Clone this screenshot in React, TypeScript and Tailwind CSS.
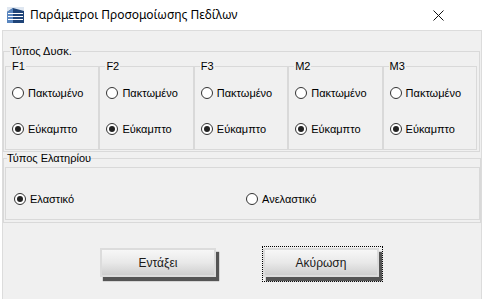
import React from 'react'

const titleFont = { fontFamily: "'Noto Sans', 'Open Sans', sans-serif" }
const formFont = { fontFamily: "'Liberation Sans', Arial, sans-serif" }

function Radio({ label, checked }: { label: string; checked?: boolean }) {
  return (
    <div className="flex items-center h-4 leading-4">
      <span className="w-3 h-3 rounded-full border border-[#333] bg-white flex items-center justify-center shrink-0">
        {checked && <span className="w-[6px] h-[6px] rounded-full bg-[#222]" />}
      </span>
      <span className="ml-[4px] text-[11px] text-black whitespace-nowrap">{label}</span>
    </div>
  )
}

function Support({ name }: { name: string }) {
  return (
    <fieldset className="border border-[#d9d9d9] pl-[5px] pt-[12px] pb-[12px] min-w-0">
      <legend className="px-[1px] text-[11px] leading-[13px] text-black">{name}</legend>
      <div className="pl-[1px] flex flex-col gap-[20px]">
        <Radio label="Πακτωμένο" />
        <Radio label="Εύκαμπτο" checked />
      </div>
    </fieldset>
  )
}

function WinButton({ label }: { label: string }) {
  return (
    <div className="relative w-[116px] h-[29px] shadow-[3px_4px_1px_#555]">
      <div className="absolute inset-0 border-2 border-[#dcdcdc] bg-gradient-to-b from-[#f7f7f7] via-[#e9e9e9] to-[#cfcfcf] flex items-center justify-center">
        <span className="text-[12px] text-[#1a1a1a]">{label}</span>
      </div>
    </div>
  )
}

export default function App() {
  return (
    <div className="w-[482px] h-[299px] bg-white flex flex-col overflow-hidden">
      <div className="h-[30px] flex items-center shrink-0" style={titleFont}>
        <svg width="17" height="16" viewBox="0 0 17 16" className="ml-[7px]">
          <rect x="0" y="0" width="17" height="16" fill="#dfe7f1" />
          <polygon points="0,16 0,5 6,1 17,4 17,16" fill="#1f4478" />
          <polygon points="0,16 0,5 6,1 6,16" fill="#5a86bf" />
          <g stroke="#ffffff" strokeWidth="1">
            <line x1="1" y1="6.5" x2="16" y2="6.5" />
            <line x1="1" y1="9.5" x2="16" y2="9.5" />
            <line x1="1" y1="12.5" x2="16" y2="12.5" />
          </g>
        </svg>
        <span className="ml-[6px] text-[12px] text-black">Παράμετροι Προσομοίωσης Πεδίλων</span>
        <svg width="11" height="11" viewBox="0 0 11 11" className="ml-auto mr-[38px]">
          <path d="M0.5 0.5 L10.5 10.5 M10.5 0.5 L0.5 10.5" stroke="#111" strokeWidth="1" />
        </svg>
      </div>

      <div className="flex-1 ml-[2px] w-[480px] bg-[#f0f0f0] border-t border-x border-[#dcdcdc] flex flex-col" style={formFont}>
        <fieldset className="mt-[14px] w-[477px] border border-[#d9d9d9] pl-[1px] pt-[2px] pb-[1px]">
          <legend className="ml-[5px] text-[11px] leading-[13px] text-black">Τύπος Δυσκ.</legend>
          <div className="grid grid-cols-5 w-[472px]">
            <Support name="F1" />
            <Support name="F2" />
            <Support name="F3" />
            <Support name="M2" />
            <Support name="M3" />
          </div>
        </fieldset>

        <fieldset className="w-[478px] border border-[#d9d9d9] pl-[1px] pt-[2px] pb-[2px]">
          <legend className="ml-[2px] text-[11px] leading-[13px] text-black">Τύπος Ελατηρίου</legend>
          <div className="h-[53px] w-[475px] border border-[#d9d9d9] pt-[23px] pl-[8px] flex">
            <div className="w-[232px]">
              <Radio label="Ελαστικό" checked />
            </div>
            <Radio label="Ανελαστικό" />
          </div>
        </fieldset>

        <div className="flex items-start">
          <div className="ml-[97px] mt-[25px]">
            <WinButton label="Εντάξει" />
          </div>
          <div className="ml-[46px] mt-[23px] border border-dotted border-black pl-0 pt-[1px] pr-[3px] pb-[4px]">
            <WinButton label="Ακύρωση" />
          </div>
        </div>
      </div>
    </div>
  )
}
